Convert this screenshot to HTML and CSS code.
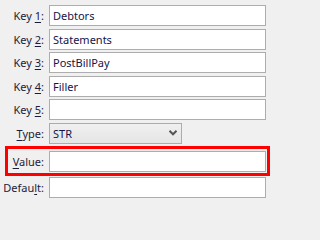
FILE: index.html
```html
<!DOCTYPE html>
<html>
<head>
<meta charset="utf-8">
<link rel="stylesheet" href="styles.css">
</head>
<body>
<div class="form">
  <div class="row">
    <label class="lbl"><span>Key <u>1</u>:</span></label>
    <div class="field">Debtors</div>
  </div>
  <div class="row">
    <label class="lbl"><span>Key <u>2</u>:</span></label>
    <div class="field">Statements</div>
  </div>
  <div class="row">
    <label class="lbl"><span>Key <u>3</u>:</span></label>
    <div class="field">PostBillPay</div>
  </div>
  <div class="row">
    <label class="lbl"><span>Key <u>4</u>:</span></label>
    <div class="field">Filler</div>
  </div>
  <div class="row">
    <label class="lbl"><span>Key <u>5</u>:</span></label>
    <div class="field"></div>
  </div>
  <div class="row">
    <label class="lbl"><span><u>T</u>ype:</span></label>
    <div class="select">
      <span>STR</span>
      <svg class="chev" width="8" height="6" viewBox="0 0 8 6"><path d="M0.5 0.8 L4 4.3 L7.5 0.8" fill="none" stroke="#555" stroke-width="2"/></svg>
    </div>
  </div>
  <div class="highlight">
    <label class="lbl"><span><u>V</u>alue:</span></label>
    <div class="field"></div>
  </div>
  <div class="row">
    <label class="lbl"><span>Defau<u>l</u>t:</span></label>
    <div class="field"></div>
  </div>
</div>
</body>
</html>
```

FILE: styles.css
```css
html, body {
  margin: 0;
  padding: 0;
  background: #f0f0f0;
}
body {
  width: 271px;
  height: 202px;
  overflow: hidden;
  font-family: "Noto Sans", "DejaVu Sans", sans-serif;
  font-size: 11px;
  color: #1c1c3c;
}
.form {
  display: flex;
  flex-direction: column;
  padding-top: 5px;
}
.row {
  display: grid;
  grid-template-columns: 44px 1fr;
  column-gap: 5px;
  padding-right: 5px;
  height: 21px;
  margin-bottom: 2.5px;
}
.lbl {
  display: flex;
  align-items: center;
  justify-content: flex-end;
  white-space: nowrap;
  line-height: 1;
}
.lbl u {
  text-decoration-thickness: 1px;
  text-underline-offset: 2px;
}
.field {
  box-sizing: border-box;
  height: 21px;
  border: 1px solid #adadad;
  background: #fff;
  padding: 0 3px;
  display: flex;
  align-items: center;
  line-height: 1;
  color: #14144a;
}
.select {
  box-sizing: border-box;
  width: 133px;
  height: 21px;
  border: 1px solid #acacac;
  background: linear-gradient(#f0f0f0, #e5e5e5);
  display: flex;
  align-items: center;
  justify-content: space-between;
  padding: 0 4px 0 3px;
  line-height: 1;
  color: #14144a;
}
.chev {
  display: block;
}
.highlight {
  display: grid;
  grid-template-columns: 36px 1fr;
  column-gap: 5px;
  margin: 0 1px 1px 5px;
  border: 3px solid #ff0000;
  padding: 2px 1px 1px 0;
  height: 30px;
  box-sizing: border-box;
}
```
